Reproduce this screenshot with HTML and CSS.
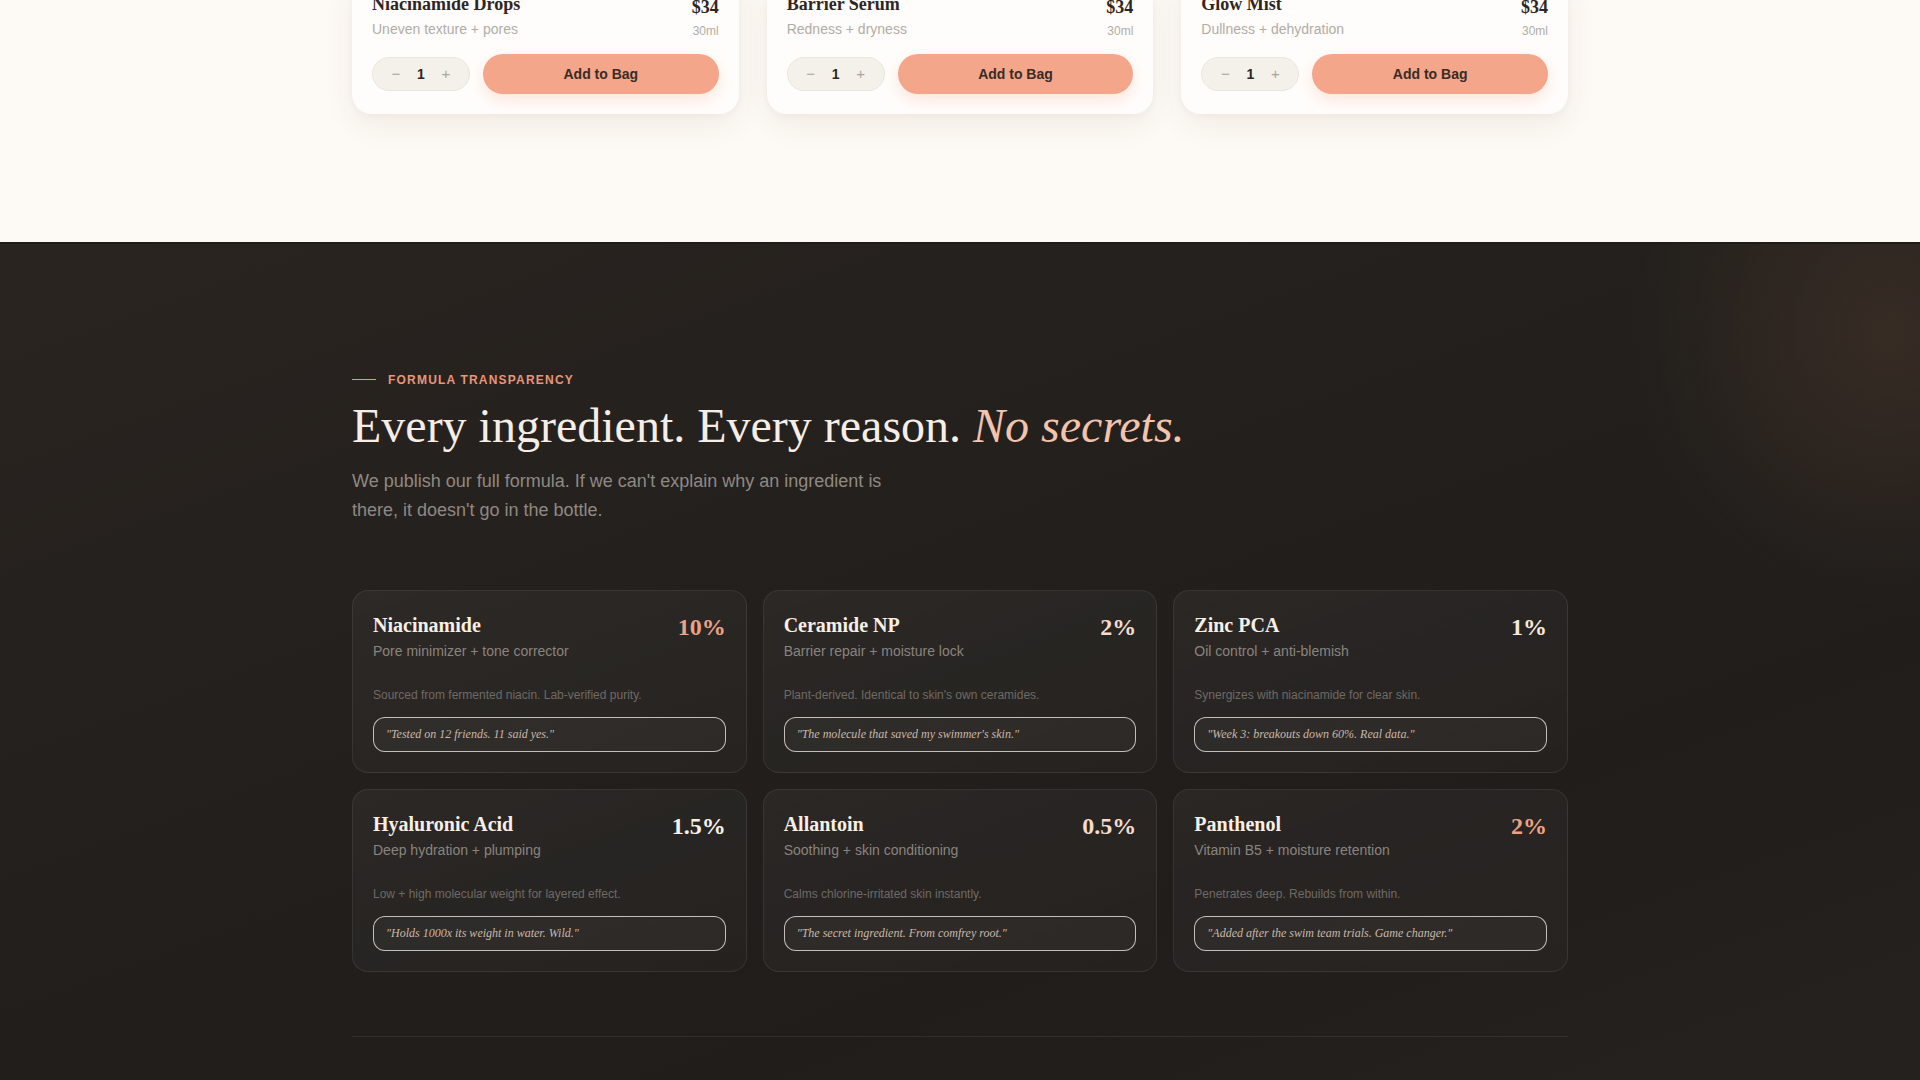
FILE: index.html
```html
<!DOCTYPE html>
<html lang="en">
<head>
<meta charset="utf-8">
<title>Formula Transparency</title>
<link rel="stylesheet" href="styles.css">
</head>
<body>
<section class="shop">
  <div class="container">
    <div class="product-grid">
      <article class="product">
        <div class="product-head">
          <div class="product-info">
            <h3 class="product-name">Niacinamide Drops</h3>
            <p class="product-sub">Uneven texture + pores</p>
          </div>
          <div class="product-price">
            <span class="price">$34</span>
            <span class="size">30ml</span>
          </div>
        </div>
        <div class="product-actions">
          <div class="stepper">
            <button class="step" type="button">−</button>
            <span class="qty">1</span>
            <button class="step" type="button">+</button>
          </div>
          <button class="add" type="button">Add to Bag</button>
        </div>
      </article>
      <article class="product">
        <div class="product-head">
          <div class="product-info">
            <h3 class="product-name">Barrier Serum</h3>
            <p class="product-sub">Redness + dryness</p>
          </div>
          <div class="product-price">
            <span class="price">$34</span>
            <span class="size">30ml</span>
          </div>
        </div>
        <div class="product-actions">
          <div class="stepper">
            <button class="step" type="button">−</button>
            <span class="qty">1</span>
            <button class="step" type="button">+</button>
          </div>
          <button class="add" type="button">Add to Bag</button>
        </div>
      </article>
      <article class="product">
        <div class="product-head">
          <div class="product-info">
            <h3 class="product-name">Glow Mist</h3>
            <p class="product-sub">Dullness + dehydration</p>
          </div>
          <div class="product-price">
            <span class="price">$34</span>
            <span class="size">30ml</span>
          </div>
        </div>
        <div class="product-actions">
          <div class="stepper">
            <button class="step" type="button">−</button>
            <span class="qty">1</span>
            <button class="step" type="button">+</button>
          </div>
          <button class="add" type="button">Add to Bag</button>
        </div>
      </article>
    </div>
  </div>
</section>

<section class="formula">
  <div class="container">
    <div class="eyebrow"><span class="eyebrow-line"></span><span class="eyebrow-text">FORMULA TRANSPARENCY</span></div>
    <h2 class="formula-title">Every ingredient. Every reason. <em>No secrets.</em></h2>
    <p class="formula-lead">We publish our full formula. If we can't explain why an ingredient is there, it doesn't go in the bottle.</p>

    <div class="ingredient-grid">
      <article class="ingredient">
        <div class="ing-head">
          <div>
            <h3 class="ing-name">Niacinamide</h3>
            <p class="ing-role">Pore minimizer + tone corrector</p>
          </div>
          <span class="ing-pct pct-accent">10%</span>
        </div>
        <p class="ing-desc">Sourced from fermented niacin. Lab-verified purity.</p>
        <p class="ing-quote">"Tested on 12 friends. 11 said yes."</p>
      </article>
      <article class="ingredient">
        <div class="ing-head">
          <div>
            <h3 class="ing-name">Ceramide NP</h3>
            <p class="ing-role">Barrier repair + moisture lock</p>
          </div>
          <span class="ing-pct pct-blush">2%</span>
        </div>
        <p class="ing-desc">Plant-derived. Identical to skin's own ceramides.</p>
        <p class="ing-quote">"The molecule that saved my swimmer's skin."</p>
      </article>
      <article class="ingredient">
        <div class="ing-head">
          <div>
            <h3 class="ing-name">Zinc PCA</h3>
            <p class="ing-role">Oil control + anti-blemish</p>
          </div>
          <span class="ing-pct pct-cream">1%</span>
        </div>
        <p class="ing-desc">Synergizes with niacinamide for clear skin.</p>
        <p class="ing-quote">"Week 3: breakouts down 60%. Real data."</p>
      </article>
      <article class="ingredient">
        <div class="ing-head">
          <div>
            <h3 class="ing-name">Hyaluronic Acid</h3>
            <p class="ing-role">Deep hydration + plumping</p>
          </div>
          <span class="ing-pct pct-white">1.5%</span>
        </div>
        <p class="ing-desc">Low + high molecular weight for layered effect.</p>
        <p class="ing-quote">"Holds 1000x its weight in water. Wild."</p>
      </article>
      <article class="ingredient">
        <div class="ing-head">
          <div>
            <h3 class="ing-name">Allantoin</h3>
            <p class="ing-role">Soothing + skin conditioning</p>
          </div>
          <span class="ing-pct pct-blush">0.5%</span>
        </div>
        <p class="ing-desc">Calms chlorine-irritated skin instantly.</p>
        <p class="ing-quote">"The secret ingredient. From comfrey root."</p>
      </article>
      <article class="ingredient">
        <div class="ing-head">
          <div>
            <h3 class="ing-name">Panthenol</h3>
            <p class="ing-role">Vitamin B5 + moisture retention</p>
          </div>
          <span class="ing-pct pct-accent">2%</span>
        </div>
        <p class="ing-desc">Penetrates deep. Rebuilds from within.</p>
        <p class="ing-quote">"Added after the swim team trials. Game changer."</p>
      </article>
    </div>

    <div class="formula-foot"></div>
  </div>
</section>
</body>
</html>
```

FILE: styles.css
```css
* { box-sizing: border-box; }

html, body {
  margin: 0;
  padding: 0;
}

body {
  font-family: "Liberation Sans", Arial, sans-serif;
  background: #fdf9f4;
  overflow: hidden;
}

.container {
  max-width: 1280px;
  margin: 0 auto;
  padding: 0 32px;
}

/* ---------- shop (top) ---------- */
.shop {
  background: #fdf9f4;
  padding-bottom: 128px;
}

.product-grid {
  display: grid;
  grid-template-columns: repeat(3, 1fr);
  gap: 28px;
  margin-top: -26px;
}

.product {
  background: #fffdfb;
  border-radius: 20px;
  padding: 20px;
  box-shadow: 0 10px 30px rgba(90, 60, 40, 0.07), 0 2px 6px rgba(90, 60, 40, 0.03);
}

.product-head {
  display: flex;
  justify-content: space-between;
  align-items: flex-end;
}

.product-name {
  margin: 0;
  font-family: "Liberation Serif", "Times New Roman", serif;
  font-weight: 700;
  font-size: 18px;
  line-height: 1.2;
  color: #2e2622;
}

.product-sub {
  margin: 3px 0 0;
  font-size: 14px;
  line-height: 1.5;
  color: #b2aca6;
}

.product-price {
  display: flex;
  flex-direction: column;
  align-items: flex-end;
}

.price {
  font-family: "Liberation Serif", "Times New Roman", serif;
  font-weight: 700;
  font-size: 18px;
  line-height: 1.2;
  color: #2e2622;
}

.size {
  margin-top: 3px;
  font-size: 12px;
  line-height: 1.5;
  color: #b2aca6;
}

.product-actions {
  display: flex;
  align-items: center;
  gap: 13px;
  margin-top: 14px;
}

.stepper {
  display: flex;
  align-items: center;
  height: 34px;
  padding: 0 10px;
  background: #f4f0ea;
  border: 1px solid #ece6dd;
  border-radius: 999px;
}

.step {
  width: 26px;
  height: 26px;
  padding: 0;
  border: none;
  background: transparent;
  font-family: "Liberation Sans", Arial, sans-serif;
  font-size: 15px;
  color: #aaa49e;
  cursor: pointer;
}

.qty {
  width: 24px;
  text-align: center;
  font-size: 14px;
  font-weight: 700;
  color: #2e2622;
}

.add {
  flex: 1;
  height: 40px;
  border: none;
  border-radius: 999px;
  background: #f3a68a;
  font-family: "Liberation Sans", Arial, sans-serif;
  font-size: 14px;
  font-weight: 700;
  color: #3b2b25;
  box-shadow: 0 6px 16px rgba(240, 160, 130, 0.25);
  cursor: pointer;
}

/* ---------- formula (dark) ---------- */
.formula {
  padding: 127px 0 80px;
  border-top: 2px solid #1f1b19;
  background:
    radial-gradient(ellipse 260px 280px at 1890px 90px, rgba(130, 90, 65, 0.22), rgba(130, 90, 65, 0) 100%),
    linear-gradient(160deg, #2a2420 0%, #221f1c 45%, #201d1b 70%, #262220 100%);
  color: #f5ede4;
}

.eyebrow {
  display: flex;
  align-items: center;
  gap: 12px;
  margin-bottom: 9px;
}

.eyebrow-line {
  width: 24px;
  height: 1px;
  background: #e8957a;
}

.eyebrow-text {
  font-size: 12px;
  line-height: 18px;
  font-weight: 700;
  letter-spacing: 1.2px;
  color: #e8957a;
}

.formula-title {
  margin: 0;
  font-family: "Liberation Serif", "Times New Roman", serif;
  font-weight: 400;
  font-size: 48px;
  line-height: 1.15;
  color: #f6eee6;
}

.formula-title em {
  font-style: italic;
  color: #f3c3ad;
}

.formula-lead {
  max-width: 560px;
  margin: 14px 0 0;
  font-size: 18px;
  line-height: 1.6;
  color: #8f8984;
}

.ingredient-grid {
  display: grid;
  grid-template-columns: repeat(3, 1fr);
  gap: 16px;
  margin-top: 66px;
}

.ingredient {
  padding: 20px;
  border: 1px solid rgba(255, 255, 255, 0.08);
  border-radius: 16px;
  background: linear-gradient(160deg, rgba(255, 255, 255, 0.045), rgba(255, 255, 255, 0.02));
}

.ing-head {
  display: flex;
  justify-content: space-between;
  align-items: flex-start;
}

.ing-name {
  margin: 0;
  font-family: "Liberation Serif", "Times New Roman", serif;
  font-weight: 700;
  font-size: 20px;
  line-height: 1.4;
  color: #f7efe6;
}

.ing-role {
  margin: 2px 0 0;
  font-size: 14px;
  line-height: 1.5;
  color: #8a847e;
}

.ing-pct {
  font-family: "Liberation Serif", "Times New Roman", serif;
  font-weight: 700;
  font-size: 24px;
  line-height: 1.4;
}

.pct-accent { color: #eca286; }
.pct-blush { color: #f5dccd; }
.pct-cream { color: #f4e9de; }
.pct-white { color: #f7f1ea; }

.ing-desc {
  margin: 24px 0 0;
  font-size: 12px;
  line-height: 18px;
  color: #6f6a65;
}

.ing-quote {
  margin: 13px 0 0;
  padding: 8px 12px;
  border: 1px solid rgba(240, 232, 224, 0.78);
  border-radius: 12px;
  background: rgba(255, 255, 255, 0.035);
  font-family: "Liberation Serif", "Times New Roman", serif;
  font-style: italic;
  font-size: 12px;
  line-height: 17px;
  color: #cbb8a8;
}

.formula-foot {
  margin-top: 64px;
  height: 1px;
  background: rgba(255, 255, 255, 0.08);
}
```
